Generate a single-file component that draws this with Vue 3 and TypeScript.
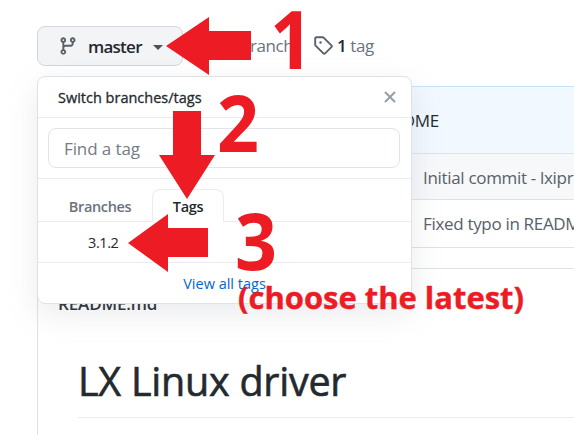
<script setup lang="ts">
import { ref } from 'vue'

const commits: string[] = ['Initial commit - lxipr', 'Fixed typo in README']
const tabs: string[] = ['Branches', 'Tags']
const activeTab = ref<string>('Tags')
const tags: string[] = ['3.1.2']
const query = ref<string>('')
</script>

<template>
  <div class="page">
    <nav class="repo-nav">
      <button class="branch-button">
        <svg class="branch-icon" viewBox="0 0 16 16" width="20" height="20">
          <path fill-rule="evenodd" d="M11.75 2.5a.75.75 0 100 1.5.75.75 0 000-1.5zm-2.25.75a2.25 2.25 0 113 2.122V6A2.5 2.5 0 0110 8.5H6a1 1 0 00-1 1v1.128a2.251 2.251 0 11-1.5 0V5.372a2.25 2.25 0 111.5 0v1.836A2.492 2.492 0 016 7h4a1 1 0 001-1v-.628A2.25 2.25 0 019.5 3.25zM4.25 12a.75.75 0 100 1.5.75.75 0 000-1.5zM3.5 3.25a.75.75 0 111.5 0 .75.75 0 01-1.5 0z" />
        </svg>
        <span class="branch-name">master</span>
        <span class="caret"></span>
      </button>
      <span class="count branches">branch</span>
      <span class="count tag-count">
        <svg viewBox="0 0 16 16" width="20" height="20">
          <path fill-rule="evenodd" d="M2.5 7.775V2.75a.25.25 0 01.25-.25h5.025a.25.25 0 01.177.073l6.25 6.25a.25.25 0 010 .354l-5.025 5.025a.25.25 0 01-.354 0l-6.25-6.25a.25.25 0 01-.073-.177zm-1.5 0V2.75C1 1.784 1.784 1 2.75 1h5.025c.464 0 .91.184 1.238.513l6.25 6.25a1.75 1.75 0 010 2.474l-5.026 5.026a1.75 1.75 0 01-2.474 0l-6.25-6.25A1.75 1.75 0 011 7.775zM6 5a1 1 0 100 2 1 1 0 000-2z" />
        </svg>
        <span class="tag-text"><b>1</b> tag</span>
      </span>
    </nav>

    <section class="files">
      <div class="files-head">README</div>
      <div v-for="commit in commits" :key="commit" class="file-row">{{ commit }}</div>
    </section>

    <section class="readme">
      <div class="readme-name">README.md</div>
      <h1><span>LX Linux driver</span></h1>
    </section>

    <div class="menu">
      <header class="menu-head">
        <span>Switch branches/tags</span>
        <svg viewBox="0 0 12 12" width="12" height="12"><path d="M1 1l10 10M11 1L1 11" /></svg>
      </header>
      <div class="filter">
        <input v-model="query" placeholder="Find a tag" />
      </div>
      <div class="tabs">
        <button v-for="tab in tabs" :key="tab" class="tab" :class="{ active: tab === activeTab }" @click="activeTab = tab">{{ tab }}</button>
      </div>
      <div v-for="tag in tags" :key="tag" class="tag-row">{{ tag }}</div>
      <div class="all-tags"><span>View all tags</span></div>
    </div>

    <svg class="notes" viewBox="0 0 574 435" width="574" height="435">
      <path d="M166 46L209 17V31H251V60H209V75Z" />
      <path d="M173 111H201V155H215L187 199L159 155H173Z" />
      <path d="M128 243L168 214V228H208V257H168V272Z" />
      <text x="270" y="69" font-size="80" textLength="43" lengthAdjust="spacingAndGlyphs">1</text>
      <text x="217" y="152" font-size="78" textLength="42" lengthAdjust="spacingAndGlyphs">2</text>
      <text x="235" y="270" font-size="78" textLength="42" lengthAdjust="spacingAndGlyphs">3</text>
      <text class="note-small" x="238" y="309" font-size="30.5" textLength="286" lengthAdjust="spacingAndGlyphs">(choose the latest)</text>
    </svg>
  </div>
</template>

<style>
body {
  overflow: hidden;
  background: #fff;
}
</style>

<style scoped>
.page {
  position: relative;
  box-sizing: border-box;
  width: 574px;
  height: 435px;
  padding: 26px 0 0 37px;
  overflow: hidden;
  font-family: "Open Sans", "Noto Sans", sans-serif;
  color: #24292e;
}
.page * {
  box-sizing: border-box;
}
button,
input {
  font-family: inherit;
  margin: 0;
}
.repo-nav {
  display: flex;
  height: 40px;
  align-items: center;
}
.branch-button {
  display: flex;
  align-items: center;
  width: 146px;
  height: 40px;
  padding: 0 0 0 20px;
  border: 1px solid #d3d6d9;
  border-radius: 8px;
  background: #f3f4f6;
  color: #24292e;
}
.branch-icon {
  fill: #586069;
}
.branch-name {
  margin-left: 10px;
  font-size: 17px;
  font-weight: 600;
  letter-spacing: -0.75px;
}
.caret {
  margin: 2px 0 0 11px;
  border: 5px solid transparent;
  border-top-color: #4c5157;
  border-bottom: 0;
}
.count {
  margin-top: -2px;
  font-size: 17px;
  letter-spacing: -0.4px;
  color: #6a737d;
}
.branches {
  width: 72px;
  margin-left: 57px;
}
.tag-count {
  display: flex;
  align-items: center;
  gap: 4px;
}
.tag-count svg {
  margin-left: 1px;
  fill: #586069;
}
.tag-count b {
  font-weight: 600;
  color: #24292e;
}
.files {
  height: 162px;
  margin-top: 20px;
  border: 1px solid #dfe2e5;
  border-top-color: #c8e1ff;
  border-right: 0;
  font-size: 17px;
  letter-spacing: -0.32px;
  white-space: nowrap;
}
.files-head {
  height: 67px;
  padding: 22px 0 0 335px;
  background: #f1f8ff;
  line-height: 24px;
  border-bottom: 1px solid #dfe2e5;
}
.file-row {
  height: 47px;
  padding-left: 385px;
  line-height: 47px;
  color: #586069;
}
.file-row:nth-child(2) {
  height: 46px;
  background: #f6f8fa;
  border-bottom: 1px solid #dfe2e5;
}
.readme {
  height: 190px;
  margin-top: 20px;
  padding: 22px 0 0 20px;
  border: 1px solid #dfe2e5;
  border-right: 0;
}
.readme-name {
  height: 26px;
  font-size: 17px;
  font-weight: 600;
  line-height: 25px;
  letter-spacing: -0.15px;
}
h1 {
  height: 101px;
  margin: 0 0 0 20px;
  padding-top: 39px;
  border-bottom: 1px solid #eaecef;
  font-size: 39.5px;
  font-weight: 500;
  line-height: 50px;
  letter-spacing: -0.25px;
  -webkit-text-stroke: 0.6px #24292e;
}
.menu {
  position: absolute;
  left: 37px;
  top: 76px;
  width: 375px;
  height: 228px;
  border: 1px solid #dfe2e5;
  border-radius: 8px;
  background: #fff;
  box-shadow: 0 10px 30px rgba(149, 157, 165, 0.2);
}
.menu-head {
  display: flex;
  align-items: center;
  justify-content: space-between;
  height: 41px;
  padding: 0 15px 0 20px;
  border-bottom: 1px solid #eaecef;
  font-size: 14.5px;
  font-weight: 500;
  letter-spacing: 0;
  -webkit-text-stroke: 0.3px #24292e;
}
.menu-head svg {
  fill: none;
  stroke: #959da5;
  stroke-width: 2;
}
.filter {
  height: 61px;
  padding: 10px;
  border-bottom: 1px solid #eaecef;
}
.filter input {
  width: 352px;
  height: 40px;
  padding: 0 15px;
  border: 1px solid #e1e4e8;
  border-radius: 8px;
  background: #fff;
  font-size: 17px;
  letter-spacing: -0.1px;
}
.filter input::placeholder {
  color: #747b84;
}
.tabs {
  display: flex;
  height: 43px;
  padding-top: 10px;
  box-shadow: inset 0 -1px #eaecef;
}
.tab {
  height: 33px;
  padding: 0;
  border: 1px solid transparent;
  border-bottom: 0;
  border-radius: 8px 8px 0 0;
  background: transparent;
  color: #6a737d;
  font-size: 14.5px;
  font-weight: 600;
  letter-spacing: -0.35px;
}
.tab:first-child {
  width: 114px;
  padding-left: 10px;
}
.tab.active {
  width: 72px;
  border-color: #eaecef;
  background: #fff;
  color: #24292e;
}
.tag-row {
  height: 41px;
  padding-left: 50px;
  border-bottom: 1px solid #eaecef;
  font-size: 14.5px;
  line-height: 41px;
  letter-spacing: -0.4px;
}
.all-tags {
  color: #0366d6;
  font-size: 14.5px;
  line-height: 41px;
  letter-spacing: 0;
  text-align: center;
}
.notes {
  position: absolute;
  left: 0;
  top: 0;
  fill: #ed1c24;
  font-weight: 700;
}
.note-small {
  stroke: #ed1c24;
  stroke-width: 0.4px;
}
</style>
